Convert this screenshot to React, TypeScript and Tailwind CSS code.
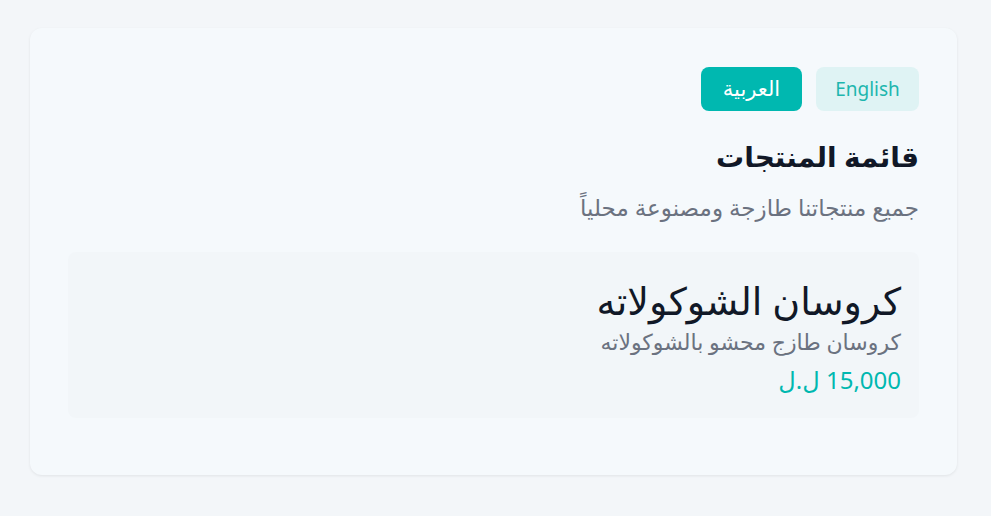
import React, { useState } from 'react';

interface Product {
  name: string;
  description: string;
  price: string;
}

const products: Product[] = [
  {
    name: 'كروسان الشوكولاته',
    description: 'كروسان طازج محشو بالشوكولاته',
    price: '15,000 ل.ل',
  },
];

export default function App() {
  const [lang, setLang] = useState<'ar' | 'en'>('ar');

  return (
    <div
      className="min-h-[516px] bg-[#f3f6f9] pt-[28px] pl-[30px] pr-[34px] pb-10"
      style={{ fontFamily: '"Noto Sans", "DejaVu Sans", sans-serif' }}
    >
      <div dir="rtl" className="rounded-xl bg-[#f5f9fc] shadow-[0_1px_3px_rgba(0,0,0,0.08)] px-[38px] pt-[39px] pb-[57px]">
        <div className="flex gap-[14px]">
          <button
            onClick={() => setLang('en')}
            className={`h-[44px] w-[103px] rounded-lg text-[19px] ${
              lang === 'en' ? 'bg-[#00b8b0] text-white' : 'bg-[#dff3f4] text-[#1db6ae]'
            }`}
          >
            English
          </button>
          <button
            onClick={() => setLang('ar')}
            className={`h-[44px] w-[101px] rounded-lg text-[21px] ${
              lang === 'ar' ? 'bg-[#00b8b0] text-white' : 'bg-[#dff3f4] text-[#1db6ae]'
            }`}
          >
            العربية
          </button>
        </div>

        <h1 className="mt-[24px] text-[28px] font-bold leading-[42px] text-[#111827]">قائمة المنتجات</h1>
        <p className="mt-[14px] text-[23px] leading-[32px] text-[#6b7280]">جميع منتجاتنا طازجة ومصنوعة محلياً</p>

        <div className="mt-[29px] space-y-4">
          {products.map((p, i) => (
            <div key={i} className="rounded-lg bg-[#f2f6f9] px-[18px] pt-[23px] pb-[22px]">
              <h2 className="text-[38px] leading-[50px] text-[#111827]">{p.name}</h2>
              <p className="mt-[1px] text-[22px] leading-[30px] text-[#6b7280]">{p.description}</p>
              <p className="mt-[8px] text-[24px] leading-[32px] text-[#00b8b0]">{p.price}</p>
            </div>
          ))}
        </div>
      </div>
    </div>
  );
}
